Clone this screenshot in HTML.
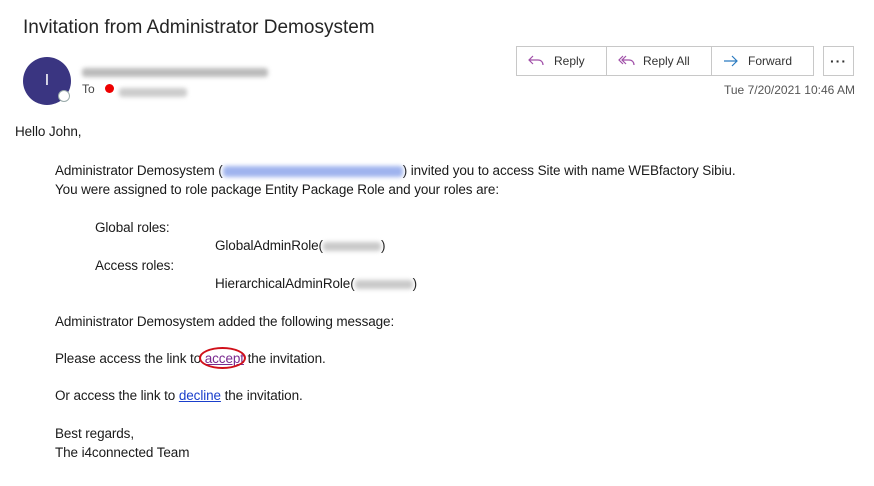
<!DOCTYPE html>
<html><head><meta charset="utf-8"><style>
body{margin:0;width:874px;height:486px;background:#fff;font-family:"Liberation Sans",sans-serif;position:relative;overflow:hidden;color:#222}
.a{position:absolute;white-space:nowrap}
.t{font-size:13.5px;letter-spacing:-0.1px;color:#1a1a1a}
.blur{display:inline-block;background:#c9c9c9;filter:blur(2px);border-radius:3px;height:9px;vertical-align:middle}
.btn{position:absolute;top:46px;height:30px;border:1px solid #c8c8c8;box-sizing:border-box;font-size:12px;color:#333;display:flex;align-items:center}
</style></head><body>
<div class="a" style="left:23px;top:17px;font-size:19px;color:#252525">Invitation from Administrator Demosystem</div>
<div class="a" style="left:23px;top:57px;width:48px;height:48px;border-radius:50%;background:#3a3581;color:#fff;font-size:16px;text-align:center;line-height:48px">I</div>
<div class="a" style="left:58px;top:90px;width:12px;height:12px;border-radius:50%;background:#fff;border:1px solid #9aa;box-sizing:border-box"></div>
<div class="a" style="left:82px;top:64px"><span class="blur" style="width:186px;background:#bbb"></span></div>
<div class="a" style="left:82px;top:82px;font-size:12px;color:#444">To</div>
<div class="a" style="left:105px;top:84px;width:9px;height:9px;border-radius:50%;background:#e00"></div>
<div class="a" style="left:119px;top:84px"><span class="blur" style="width:68px;background:#ccc"></span></div>

<div class="btn" style="left:516px;width:91px;padding-left:10px">
<svg width="18" height="14" viewBox="0 0 18 14" fill="none" stroke="#a04fa8" stroke-width="1.2"><path d="M6 2L2 6l4 4M2 6h9c3 0 5 2 5 5"/></svg><span style="margin-left:9px">Reply</span></div>
<div class="btn" style="left:606px;width:106px;padding-left:12px;border-left:none">
<svg width="18" height="14" viewBox="0 0 18 14" fill="none" stroke="#a04fa8" stroke-width="1.2"><path d="M5 2L1 6l4 4M8 2L4 6l4 4M4 6h7c3 0 5 2 5 5"/></svg><span style="margin-left:7px">Reply All</span></div>
<div class="btn" style="left:711px;width:103px;padding-left:12px;border-left:none">
<svg width="16" height="14" viewBox="0 0 16 14" fill="none" stroke="#2b7bc0" stroke-width="1.2"><path d="M1 7h13M9 2l5 5-5 5"/></svg><span style="margin-left:9px">Forward</span></div>
<div class="btn" style="left:823px;width:31px;justify-content:center;font-size:14px;letter-spacing:1px;font-weight:bold">···</div>
<div class="a" style="left:724px;top:83px;font-size:12px;color:#555">Tue 7/20/2021 10:46 AM</div>

<div class="a t" style="left:15px;top:124px">Hello John,</div>
<div class="a t" style="left:55px;top:163px">Administrator Demosystem (<span class="blur" style="width:180px;background:#9fb3ee;height:11px"></span>) invited you to access Site with name WEBfactory Sibiu.</div>
<div class="a t" style="left:55px;top:182px">You were assigned to role package Entity Package Role and your roles are:</div>
<div class="a t" style="left:95px;top:220px">Global roles:</div>
<div class="a t" style="left:215px;top:238px">GlobalAdminRole(<span class="blur" style="width:58px"></span>)</div>
<div class="a t" style="left:95px;top:258px">Access roles:</div>
<div class="a t" style="left:215px;top:276px">HierarchicalAdminRole(<span class="blur" style="width:58px"></span>)</div>
<div class="a t" style="left:55px;top:314px">Administrator Demosystem added the following message:</div>
<div class="a t" style="left:55px;top:351px">Please access the link to <span style="color:#7a2a8f;text-decoration:underline">accept</span> the invitation.</div>
<div class="a" style="left:199px;top:347px;width:47px;height:22px;border:2px solid #d0101a;border-radius:50%;box-sizing:border-box"></div>
<div class="a t" style="left:55px;top:388px">Or access the link to <span style="color:#1a3fcc;text-decoration:underline">decline</span> the invitation.</div>
<div class="a t" style="left:55px;top:426px">Best regards,</div>
<div class="a t" style="left:55px;top:445px">The i4connected Team</div>
</body></html>
